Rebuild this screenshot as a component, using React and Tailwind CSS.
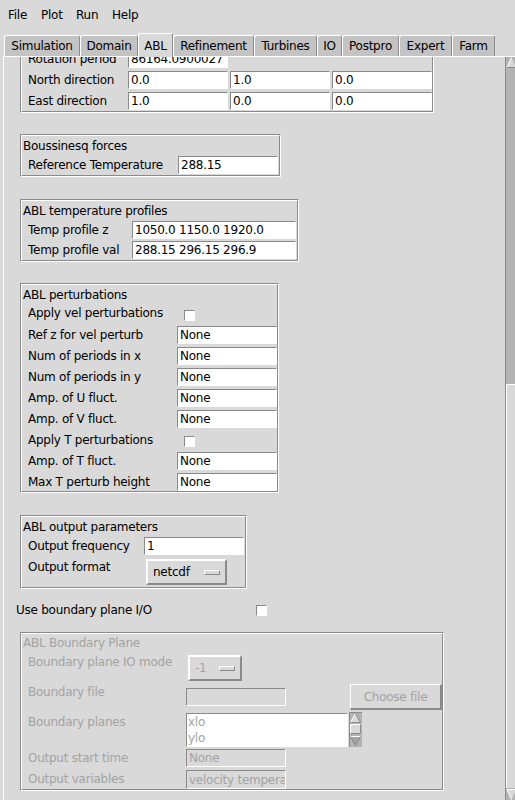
import React from 'react';

const menus = [
  { name: 'File', w: 'w-[33px]' },
  { name: 'Plot', w: 'w-[35px]' },
  { name: 'Run', w: 'w-[36px]' },
  { name: 'Help', w: 'w-auto' },
];

const tabs = [
  { name: 'Simulation', w: 'w-[76px]' },
  { name: 'Domain', w: 'w-[58px]' },
  { name: 'ABL', w: 'w-[35px]', active: true },
  { name: 'Refinement', w: 'w-[81px]' },
  { name: 'Turbines', w: 'w-[63px]' },
  { name: 'IO', w: 'w-[25px]' },
  { name: 'Postpro', w: 'w-[57px]' },
  { name: 'Expert', w: 'w-[53px]' },
  { name: 'Farm', w: 'w-[43px]' },
];

const perturbRows = [
  { label: 'Ref z for vel perturb' },
  { label: 'Num of periods in x' },
  { label: 'Num of periods in y' },
  { label: 'Amp. of U fluct.' },
  { label: 'Amp. of V fluct.' },
  { label: 'Apply T perturbations', check: true },
  { label: 'Amp. of T fluct.' },
  { label: 'Max T perturb height', last: true },
];

// sunken text entry, like a Tk Entry
const Entry = ({ value = '', w = 'w-[100px]', h = 'h-[18px]', disabled, className = '' }) => (
  <div
    className={`${w} ${h} ${className} shrink-0 overflow-hidden whitespace-nowrap flex items-center pl-[2px] leading-none border border-t-[#8a8a8a] border-l-[#8a8a8a] border-b-white border-r-white ${
      disabled ? 'bg-[#d9d9d9] text-[#a3a3a3]' : 'bg-white text-black'
    }`}
  >
    {value}
  </div>
);

const Check = ({ className = '' }) => (
  <div className={`w-[11px] h-[11px] shrink-0 bg-white border border-t-[#8a8a8a] border-l-[#8a8a8a] border-b-white border-r-white ${className}`} />
);

const MenuButton = ({ label, w, disabled, className = '' }) => (
  <div
    className={`${w} h-[26px] shrink-0 flex items-center justify-between pl-[5px] pr-[5px] border-2 border-t-white border-l-white border-b-[#8a8a8a] border-r-[#8a8a8a] ${
      disabled ? 'text-[#a3a3a3]' : 'text-black'
    } ${className}`}
  >
    <span>{label}</span>
    <span className="w-[16px] h-[5px] border border-t-white border-l-white border-b-[#8a8a8a] border-r-[#8a8a8a]" />
  </div>
);

// labelled frame with a groove border
const Group = ({ title, w, titleH = 'h-[19px]', disabled, className = '', children }) => (
  <div className={`ml-[16px] ${w} shrink-0 border border-t-[#8a8a8a] border-l-[#8a8a8a] border-b-white border-r-white ${className}`}>
    <div className="border border-t-white border-l-white border-b-[#8a8a8a] border-r-[#8a8a8a]">
      <div className={`${titleH} pl-[1px] flex items-center ${disabled ? 'text-[#a3a3a3]' : ''}`}>{title}</div>
      {children}
    </div>
  </div>
);

const Row = ({ label, lw, h = 'h-[21px]', lh = 'h-[20px]', disabled, children }) => (
  <div className={`flex items-start ${h}`}>
    <div className={`${lw} ${lh} shrink-0 pl-[6px] flex items-center whitespace-nowrap ${disabled ? 'text-[#a3a3a3]' : ''}`}>{label}</div>
    {children}
  </div>
);

const ListScroll = () => (
  <svg width="13" height="35" viewBox="0 0 13 35" className="shrink-0 ml-[1px]">
    <rect x="0" y="0" width="13" height="35" fill="#b3b3b3" />
    <path d="M0.5 35 V0.5 H13" stroke="#8a8a8a" fill="none" />
    <polygon points="6.5,1.5 1.5,10.5 11.5,10.5" fill="#d9d9d9" />
    <path d="M1.5 10.5 L6.5 1.5" stroke="#ffffff" fill="none" />
    <path d="M6.5 1.5 L11.5 10.5 H1.5" stroke="#8a8a8a" fill="none" />
    <rect x="1.5" y="12.5" width="10" height="9" fill="#d9d9d9" stroke="#ffffff" />
    <path d="M11.5 12.5 V21.5 H1.5" stroke="#8a8a8a" fill="none" />
    <polygon points="1.5,24.5 11.5,24.5 6.5,33.5" fill="#a3a3a3" />
    <path d="M1.5 24.5 H11.5" stroke="#ffffff" fill="none" />
    <path d="M11.5 24.5 L6.5 33.5 L1.5 24.5" stroke="#8a8a8a" fill="none" />
  </svg>
);

const App = () => {
  return (
    <div className="w-[515px] h-[800px] overflow-hidden bg-[#d9d9d9] text-black text-[12px] tracking-[-0.25px] font-['DejaVu_Sans',sans-serif] flex flex-col">
      {/* menu bar */}
      <div className="h-[30px] shrink-0 flex items-center pl-[8px]">
        {menus.map((m) => (
          <div key={m.name} className={m.w}>
            {m.name}
          </div>
        ))}
      </div>

      <div className="ml-[3px] flex-1 min-h-0 flex flex-col">
        {/* tabs */}
        <div className="h-[27px] shrink-0 flex items-end pl-[1px] border-b border-white">
          {tabs.map((t) => (
            <div
              key={t.name}
              className={`${t.w} shrink-0 flex items-center justify-center whitespace-nowrap rounded-t-[3px] border-t border-l border-r border-t-white border-l-white border-r-[#8a8a8a] ${
                t.active ? 'h-[24px] -mb-px bg-[#d9d9d9]' : 'h-[21px] bg-[#c3c3c3]'
              }`}
            >
              {t.name}
            </div>
          ))}
        </div>

        {/* tab pane, scrolled down a little so the first frame's top is hidden */}
        <div className="flex-1 min-h-0 flex border-l border-white">
          <div className="flex-1 min-w-0 overflow-hidden">
            <div className="flex flex-col items-start">
              <Group title="" w="w-[414px]" className="mt-[-29px]">
                <Row label="Rotation period" lw="w-[106px]">
                  <Entry value="86164.0900027" className="mt-[1px]" />
                </Row>
                <Row label="North direction" lw="w-[106px]">
                  <Entry value="0.0" className="mt-[1px]" />
                  <Entry value="1.0" className="mt-[1px] ml-[2px]" />
                  <Entry value="0.0" className="mt-[1px] ml-[2px]" />
                </Row>
                <Row label="East direction" lw="w-[106px]" h="h-[20px]">
                  <Entry value="1.0" className="mt-[1px]" />
                  <Entry value="0.0" className="mt-[1px] ml-[2px]" />
                  <Entry value="0.0" className="mt-[1px] ml-[2px]" />
                </Row>
              </Group>

              <Group title="Boussinesq forces" w="w-[261px]" className="mt-[21px]">
                <Row label="Reference Temperature" lw="w-[156px]" h="h-[20px]">
                  <Entry value="288.15" className="mt-[1px]" />
                </Row>
              </Group>

              <Group title="ABL temperature profiles" w="w-[279px]" className="mt-[22px]">
                <Row label="Temp profile z" lw="w-[110px]" h="h-[20px]">
                  <Entry value="1050.0 1150.0 1920.0" w="w-[164px]" className="mt-[1px]" />
                </Row>
                <Row label="Temp profile val" lw="w-[110px]" h="h-[20px]">
                  <Entry value="288.15 296.15 296.9" w="w-[164px]" className="mt-[1px]" />
                </Row>
              </Group>

              <Group title="ABL perturbations" w="w-[259px]" className="mt-[21px]">
                <Row label="Apply vel perturbations" lw="w-[155px]" h="h-[22px]" lh="h-[17px]">
                  <Check className="mt-[6px] ml-[7px]" />
                </Row>
                {perturbRows.map((r) =>
                  r.check ? (
                    <Row key={r.label} label={r.label} lw="w-[155px]" h="h-[21px]" lh="h-[17px]">
                      <Check className="mt-[5px] ml-[7px]" />
                    </Row>
                  ) : (
                    <Row key={r.label} label={r.label} lw="w-[155px]" h={r.last ? 'h-[18px]' : 'h-[21px]'} lh="h-[18px]">
                      <Entry value="None" />
                    </Row>
                  )
                )}
              </Group>

              <Group title="ABL output parameters" w="w-[227px]" className="mt-[22px]">
                <Row label="Output frequency" lw="w-[122px]" h="h-[21px]">
                  <Entry value="1" className="mt-[1px]" />
                </Row>
                <Row label="Output format" lw="w-[122px]" h="h-[30px]">
                  <MenuButton label="netcdf" w="w-[81px]" className="mt-[2px] ml-[2px]" />
                </Row>
              </Group>

              <div className="mt-[11px] ml-[12px] h-[20px] flex items-center">
                <div className="w-[240px]">Use boundary plane I/O</div>
                <Check />
              </div>

              <Group title="ABL Boundary Plane" w="w-[424px]" titleH="h-[18px]" disabled className="mt-[12px]">
                <Row label="Boundary plane IO mode" lw="w-[164px]" h="h-[30px]" disabled>
                  <MenuButton label="-1" w="w-[54px]" disabled className="mt-[3px] ml-[2px]" />
                </Row>
                <Row label="Boundary file" lw="w-[164px]" h="h-[30px]" disabled>
                  <Entry disabled className="mt-[6px]" />
                  <div className="ml-[64px] mt-[2px] w-[92px] h-[26px] shrink-0 flex items-center justify-center text-[#a3a3a3] border-t border-l border-b-2 border-r-2 border-t-white border-l-white border-b-[#8a8a8a] border-r-[#8a8a8a]">
                    Choose file
                  </div>
                </Row>
                <Row label="Boundary planes" lw="w-[164px]" h="h-[36px]" disabled>
                  <div className="mt-[1px] w-[162px] h-[34px] shrink-0 bg-white text-[#a3a3a3] pl-[1px] border border-t-[#8a8a8a] border-l-[#8a8a8a] border-b-white border-r-white flex flex-col leading-none">
                    <div className="h-[16px] flex items-center">xlo</div>
                    <div className="h-[16px] flex items-center">ylo</div>
                  </div>
                  <ListScroll />
                </Row>
                <Row label="Output start time" lw="w-[164px]" h="h-[21px]" disabled>
                  <Entry value="None" disabled className="mt-[1px]" />
                </Row>
                <Row label="Output variables" lw="w-[164px]" h="h-[20px]" disabled>
                  <Entry value="velocity temperature" disabled h="h-[19px]" className="mt-[1px]" />
                </Row>
              </Group>
            </div>
          </div>

          {/* vertical scrollbar */}
          <div className="w-[10px] shrink-0 border-l border-[#8a8a8a] flex flex-col">
            <svg width="9" height="11" viewBox="0 0 9 11" className="shrink-0">
              <rect x="0" y="0" width="9" height="11" fill="#b3b3b3" />
              <polygon points="5.5,0.5 1,10.5 10,10.5" fill="#d9d9d9" />
              <path d="M1 10.5 L5.5 0.5" stroke="#ffffff" fill="none" />
              <path d="M1 10.5 H9" stroke="#8a8a8a" fill="none" />
            </svg>
            <div className="h-[316px] shrink-0 bg-[#b3b3b3]" />
            <div className="flex-1 bg-[#d9d9d9] border-t border-l border-white" />
            <svg width="9" height="12" viewBox="0 0 9 12" className="shrink-0">
              <rect x="0" y="0" width="9" height="12" fill="#b3b3b3" />
              <polygon points="1,1.5 10,1.5 5.5,11.5" fill="#d9d9d9" />
              <path d="M1 1.5 H9" stroke="#ffffff" fill="none" />
              <path d="M1 1.5 L5.5 11.5" stroke="#ffffff" fill="none" />
            </svg>
          </div>
        </div>
      </div>
    </div>
  );
};

export default App;
